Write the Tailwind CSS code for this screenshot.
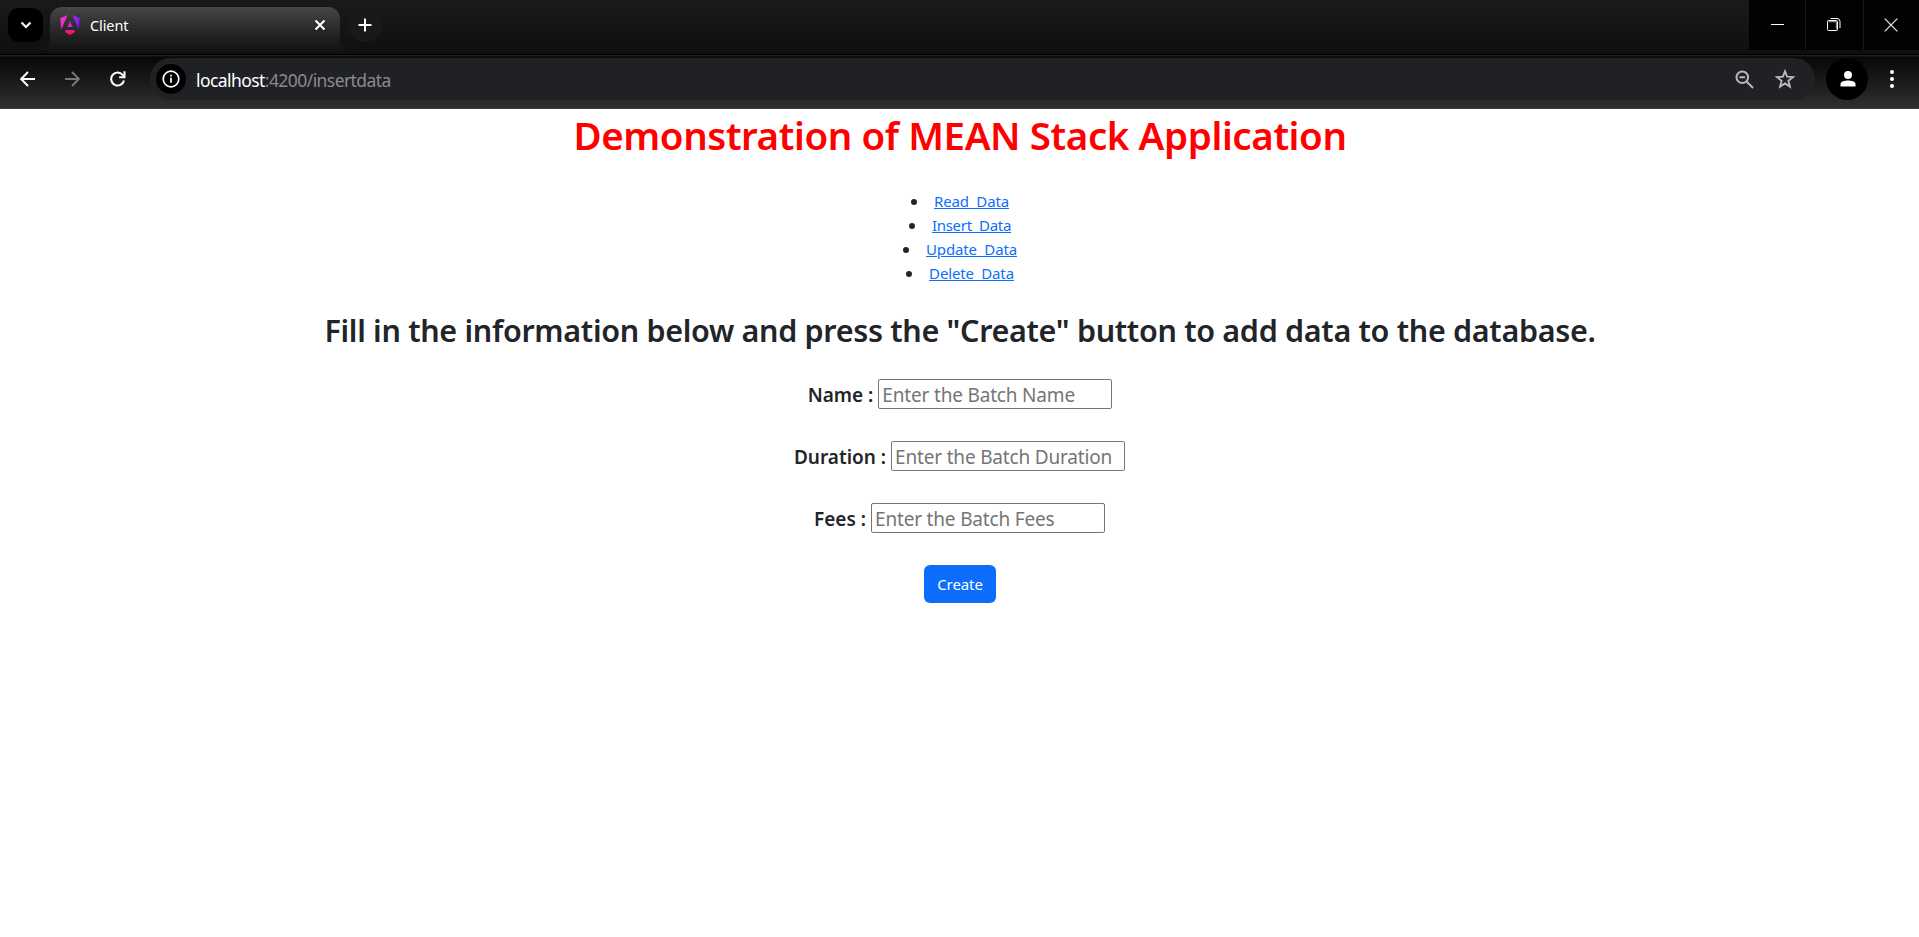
<!DOCTYPE html>
<html lang="en">
<head>
<meta charset="utf-8">
<title>Client</title>
<script src="https://cdn.jsdelivr.net/npm/@tailwindcss/browser@4"></script>
</head>
<body class="flex h-screen flex-col overflow-hidden bg-white font-['Noto_Sans',sans-serif] text-[#212529]">

<!-- Tab strip -->
<header class="flex h-[54px] shrink-0 items-start bg-linear-to-b from-[#1a1a1a] to-[#0f0f0f]">
  <button class="mt-2 ml-2 flex h-[34px] w-[35px] items-center justify-center rounded-[11px] bg-black" aria-label="Search tabs">
    <svg class="size-3" viewBox="0 0 12 12" fill="none" stroke="#fff" stroke-width="2.2"><path d="M1.5 3.5 6 8l4.500-4.500"/></svg>
  </button>
  <div class="relative mt-[7px] ml-[7px] flex h-[47px] w-[290px] items-start rounded-t-[12px] bg-linear-to-b from-[#474747] via-[#282828] via-50% to-[#101010] pt-[7px] pr-[14px] pl-[10px]">
    <svg class="mt-px size-5" viewBox="0 0 20 20">
      <defs>
        <linearGradient id="pk" x1="0" y1="0" x2="1" y2="1"><stop offset="0" stop-color="#f03ae0"/><stop offset="1" stop-color="#e91fb5"/></linearGradient>
        <linearGradient id="vi" x1="0" y1="0" x2="1" y2="1"><stop offset="0" stop-color="#b02cf5"/><stop offset="1" stop-color="#6a12f0"/></linearGradient>
        <linearGradient id="rd" x1="0" y1="0" x2="0" y2="1"><stop offset="0" stop-color="#e8189c"/><stop offset="1" stop-color="#ff1050"/></linearGradient>
      </defs>
      <path d="M7.600 0 .3 3.200 1.300 14.500z" fill="url(#pk)"/>
      <path d="M12.400 0l7.300 3.200-1 11.300z" fill="url(#vi)"/>
      <path d="M10 5.800 7.500 12h5z" fill="#dc20b8"/>
      <path d="M5.800 15 5 17l5 3 5-3-.8-2z" fill="url(#rd)"/>
    </svg>
    <span class="ml-[10px] text-[14.5px] leading-[22px] tracking-[-0.1px] text-white">Client</span>
    <svg class="mt-[5px] ml-auto size-3" viewBox="0 0 12 12" fill="none" stroke="#fff" stroke-width="2"><path d="M1.500 1.500l9 9m0-9-9 9"/></svg>
    <svg class="absolute bottom-[4px] -left-[14px] h-[14px] w-[14px]" viewBox="0 0 14 14"><path d="M14 0A14 14 0 0 1 0 14h14z" fill="#151515"/></svg>
    <svg class="absolute -right-[14px] bottom-[4px] h-[14px] w-[14px]" viewBox="0 0 14 14"><path d="M0 0a14 14 0 0 0 14 14H0z" fill="#151515"/></svg>
  </div>
  <button class="mt-2 ml-2 flex size-[34px] items-center justify-center rounded-full bg-[#191919]" aria-label="New tab">
    <svg class="size-[14px]" viewBox="0 0 14 14" fill="none" stroke="#fff" stroke-width="2"><path d="M7 .5v13M.5 7h13"/></svg>
  </button>
  <div class="ml-auto flex h-[50px] w-[170px] gap-px bg-[#181818]">
    <button class="flex w-14 items-center justify-center bg-[#020202]" aria-label="Minimize">
      <svg class="h-[14px] w-[13px]" viewBox="0 0 13 14"><path d="M0 6h13v1H0z" fill="#fff"/></svg>
    </button>
    <button class="flex w-[57px] items-center justify-center bg-[#020202]" aria-label="Restore">
      <svg class="-ml-[2px] size-[14px]" viewBox="0 0 14 14" fill="none"><path d="M3.500.5h6.500a3 3 0 0 1 3 3v6.500" stroke="#fff"/><path d="M1.500 3.500H8.500A1 1 0 0 1 9.500 4.500v7" stroke="#888" stroke-width="1.500"/><rect x=".5" y="2.500" width="10" height="10" rx="1" stroke="#fff"/></svg>
    </button>
    <button class="flex w-[55px] items-center justify-center bg-[#020202]" aria-label="Close">
      <svg class="-ml-px size-[14px]" viewBox="0 0 14 14" fill="none" stroke="#ededed" stroke-width="1.200"><path d="M.7.7l12.600 12.600M13.300.7.7 13.300"/></svg>
    </button>
  </div>
</header>
<div class="h-px shrink-0 bg-black"></div>
<div class="h-px shrink-0 bg-[#202020]"></div>
<div class="h-px shrink-0 bg-[#101010]"></div>

<!-- Toolbar -->
<nav class="flex h-[52px] shrink-0 items-start border-b border-[#3a3a3a] bg-linear-to-b from-[#080808] to-[#303030] pt-px">
  <svg class="mt-[13px] ml-5 h-4 w-[15px]" viewBox="0 0 15 16" fill="none" stroke="#fff" stroke-width="1.900"><path d="M15 8H1.500M8 1 1.200 8 8 15"/></svg>
  <svg class="mt-[13px] ml-[30px] h-4 w-[15px]" viewBox="0 0 15 16" fill="none" stroke="#777" stroke-width="1.900"><path d="M0 8h13.500M7 1l6.800 7L7 15"/></svg>
  <svg class="mt-[13px] ml-[30px] h-4 w-4" viewBox="0 0 16 16" fill="none" stroke="#fff" stroke-width="2"><path d="M14 9.500A6.500 6.500 0 1 1 13 4.300l1.200 1.700"/><path d="M14.500.3v6H9.200" /></svg>
  <div class="ml-6 flex h-[42px] w-[1665px] items-center rounded-full bg-[#202124] pr-5 pl-[6px]">
    <span class="flex size-[30px] items-center justify-center rounded-full bg-black">
      <svg class="size-[18px]" viewBox="0 0 18 18" fill="none" stroke="#fff" stroke-width="1.700"><circle cx="9" cy="9" r="7.800"/><path d="M9 7.800v5M9 4.800v1.800"/></svg>
    </span>
    <span class="ml-[10px] pt-px text-[17.5px] leading-6 tracking-[-0.57px] text-white">localhost<span class="text-[#8b8b8b]">:4200/insertdata</span></span>
    <svg class="ml-auto size-[19px]" viewBox="0 0 19 19" fill="none" stroke="#b8b8b8" stroke-width="2"><circle cx="7.300" cy="7.300" r="5.800"/><path d="M4.500 7.300h5.600M11.500 11.500l6.500 6.500"/></svg>
    <svg class="ml-[21px] h-5 w-5" viewBox="0 0 20 20" fill="none" stroke="#b8b8b8" stroke-width="1.900"><path d="M10 2.300l2.100 5.400 5.900.4-4.600 3.700 1.500 5.800L10 14.400l-4.900 3.200 1.500-5.800L2 8.100l5.900-.4z"/></svg>
  </div>
  <span class="ml-[11px] flex size-[42px] items-center justify-center rounded-full bg-black">
    <svg class="ml-px h-4 w-4" viewBox="0 0 16 16" fill="#fff"><circle cx="8" cy="4" r="4"/><path d="M.5 15.500v-2.500C.5 10.500 4.500 9.500 8 9.500s7.500 1 7.500 3.500v2.500z"/></svg>
  </span>
  <svg class="mt-3 ml-[22px] h-[18px] w-1" viewBox="0 0 4 18" fill="#fff"><circle cx="2" cy="2" r="2"/><circle cx="2" cy="9" r="2"/><circle cx="2" cy="16" r="2"/></svg>
</nav>

<!-- Page -->
<main class="flex flex-col items-center pl-px">
  <h1 class="pt-px text-[38.5px] leading-[50px] font-semibold tracking-[-0.42px] text-[#ff0000]">Demonstration of MEAN Stack Application</h1>

  <ul class="mt-[29px] flex flex-col items-center text-[15px] leading-6 text-[#0d6efd]">
    <li class="flex items-center gap-[17px]"><span class="mt-[2px] size-[6px] rounded-full bg-[#212529]"></span><a class="tracking-[-0.15px] underline" href="#">Read&nbsp; Data</a></li>
    <li class="flex items-center gap-[17px]"><span class="mt-[2px] size-[6px] rounded-full bg-[#212529]"></span><a class="tracking-[-0.3px] underline" href="#">Insert&nbsp; Data</a></li>
    <li class="flex items-center gap-[17px]"><span class="mt-[2px] size-[6px] rounded-full bg-[#212529]"></span><a class="tracking-[-0.15px] underline" href="#">Update&nbsp; Data</a></li>
    <li class="flex items-center gap-[17px]"><span class="mt-[2px] size-[6px] rounded-full bg-[#212529]"></span><a class="tracking-[-0.15px] underline" href="#">Delete&nbsp; Data</a></li>
  </ul>

  <h2 class="mt-[24px] pt-px text-[30.5px] leading-[40px] font-semibold tracking-[-0.32px]">Fill in the information below and press the "Create" button to add data to the database.</h2>

  <form class="mt-[29px] flex flex-col items-center gap-8">
    <label class="flex h-[30px] items-center gap-[5px] text-[19px] font-semibold"><span class="pt-[2px]">Name :</span>
      <input class="h-[30px] w-[234px] rounded-[2px] border border-[#767676] px-[3px] pt-px font-normal tracking-[-0.18px] placeholder:text-[#757575]" placeholder="Enter the Batch Name">
    </label>
    <label class="flex h-[30px] items-center gap-[5px] pr-px text-[19px] font-semibold"><span class="pt-[2px]">Duration :</span>
      <input class="h-[30px] w-[234px] rounded-[2px] border border-[#767676] px-[3px] pt-px font-normal tracking-[-0.18px] placeholder:text-[#757575]" placeholder="Enter the Batch Duration">
    </label>
    <label class="flex h-[30px] items-center gap-[5px] pr-px text-[19px] font-semibold"><span class="pt-[2px]">Fees :</span>
      <input class="h-[30px] w-[234px] rounded-[2px] border border-[#767676] px-[3px] pt-px font-normal tracking-[-0.18px] placeholder:text-[#757575]" placeholder="Enter the Batch Fees">
    </label>
    <button type="button" class="h-[38px] w-[72px] rounded-[6px] bg-[#0d6efd] text-[15px] leading-6 tracking-[-0.1px] text-white">Create</button>
  </form>
</main>
</body>
</html>
